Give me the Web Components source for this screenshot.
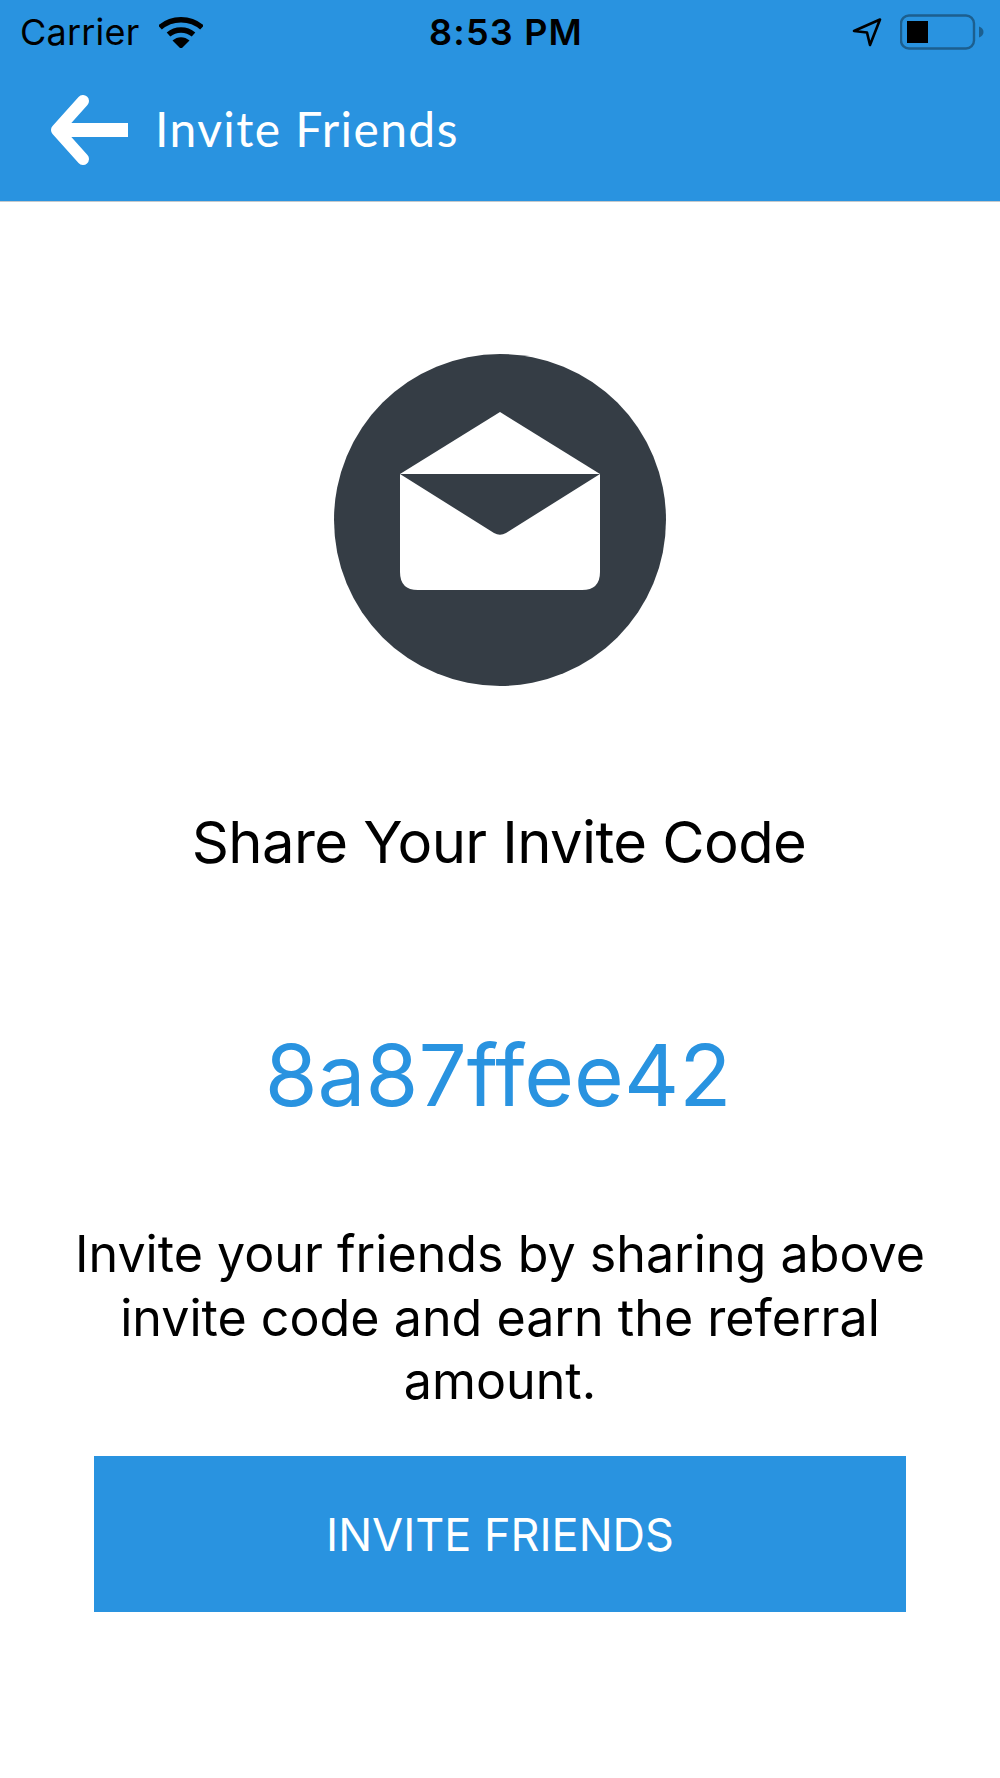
<!DOCTYPE html>
<html>
<head>
<meta charset="utf-8">
<title>Invite Friends</title>
<style>
  html, body { margin: 0; padding: 0; background: #fff; }
</style>
</head>
<body>
<invite-screen>
  <app-header title="Invite Friends"></app-header>
  <mail-badge></mail-badge>
  <invite-text kind="heading">Share Your Invite Code</invite-text>
  <invite-text kind="code">8a87ffee42</invite-text>
  <invite-text kind="body">Invite your friends by sharing above invite code and earn the referral amount.</invite-text>
  <invite-button>INVITE FRIENDS</invite-button>
</invite-screen>

<script>
class InviteScreen extends HTMLElement {
  constructor() {
    super();
    this.shadowDOM = this.attachShadow({mode: "open"});
  }
  connectedCallback() {
    this.shadowDOM.innerHTML = `
    <style>
      :host {
        display: flex;
        flex-direction: column;
        align-items: center;
        width: 100%;
        height: 1778px;
        background: #fff;
        overflow: hidden;
      }
    </style>
    <slot></slot>`;
  }
}

class AppHeader extends HTMLElement {
  constructor() {
    super();
    this.shadowDOM = this.attachShadow({mode: "open"});
  }
  connectedCallback() {
    this.shadowDOM.innerHTML = `
    <style>
      * { box-sizing: border-box; margin: 0; padding: 0; }
      :host {
        display: block;
        width: 100%;
        height: 201px;
        background: #2993e0;
        border-bottom: 1px solid #c4c9cc;
      }
      .status {
        display: grid;
        grid-template-columns: 1fr auto 1fr;
        align-items: center;
        height: 64px;
        color: #000;
        font-family: Inter, "Liberation Sans", sans-serif;
      }
      .left { display: flex; align-items: center; padding-left: 20px; gap: 20px; font-size: 36px; letter-spacing: .2px; }
      .time { padding-left: 12px; font-size: 36px; font-weight: 600; letter-spacing: 1.2px; }
      .right { display: flex; align-items: center; justify-content: flex-end; padding-right: 16px; gap: 18px; }
      .nav {
        display: flex;
        align-items: center;
        height: 136px;
        padding: 0 0 4px 50px;
        gap: 25px;
        color: #fff;
        font: 400 48px Lato, "Open Sans", sans-serif;
        letter-spacing: 1.4px;
      }
      .nav span { margin-bottom: 4px; }
      svg { display: block; }
    </style>
    <div class="status">
      <div class="left">
        <span>Carrier</span>
        <svg width="44" height="32" viewBox="0 0 44 32">
          <path d="M1 10.5C12.5 0 31.5 0 43 10.5" transform="translate(0 1)" fill="none" stroke="#000" stroke-width="5.5"/>
          <path d="M9.5 18.5C16.5 12.5 27.5 12.5 34.5 18.5" fill="none" stroke="#000" stroke-width="5.5"/>
          <path d="M13.5 24.5C18.5 20 25.5 20 30.5 24.5L22 33Z" fill="#000"/>
        </svg>
      </div>
      <div class="time">8:53 PM</div>
      <div class="right">
        <svg width="30" height="30" viewBox="0 0 30 30">
          <path d="M2 14L28 2.5 18 28 15 15.5Z" fill="none" stroke="#000" stroke-width="2.6" stroke-linejoin="round"/>
        </svg>
        <svg width="84" height="36" viewBox="0 0 84 36">
          <rect x="1" y="1.5" width="73" height="33" rx="8" fill="none" stroke="#1c5f8f" stroke-width="2.4"/>
          <rect x="7" y="7" width="21" height="22" fill="#000"/>
          <path d="M79 12.5C82 13.5 83.5 15.5 83.5 18S82 22.500 79 23.500Z" fill="#1c5f8f"/>
        </svg>
      </div>
    </div>
    <div class="nav">
      <svg width="80" height="70" viewBox="0 0 80 70">
        <path d="M78 35H8" fill="none" stroke="#fff" stroke-width="14"/>
        <path d="M33 6 7 35 33 64" fill="none" stroke="#fff" stroke-width="12" stroke-linejoin="round" stroke-linecap="round"/>
      </svg>
      <span>${this.getAttribute("title")}</span>
    </div>`;
  }
}

class MailBadge extends HTMLElement {
  constructor() {
    super();
    this.shadowDOM = this.attachShadow({mode: "open"});
  }
  connectedCallback() {
    this.shadowDOM.innerHTML = `
    <style>
      :host { display: block; width: 332px; height: 332px; margin-top: 152px; }
      svg { display: block; }
    </style>
    <svg width="332" height="332" viewBox="0 0 332 332">
      <circle cx="166" cy="166" r="166" fill="#353d45"/>
      <path d="M66 120 166 58 266 120Z" fill="#fff"/>
      <path d="M66 120 160 179Q166 182.500 172 179L266 120V218Q266 236 248 236H84Q66 236 66 218Z" fill="#fff"/>
    </svg>`;
  }
}

class InviteText extends HTMLElement {
  constructor() {
    super();
    this.shadowDOM = this.attachShadow({mode: "open"});
  }
  connectedCallback() {
    this.shadowDOM.innerHTML = `
    <style>
      :host {
        display: block;
        text-align: center;
        font-family: Inter, "Liberation Sans", sans-serif;
        color: #000;
      }
      :host([kind="heading"]) { margin-top: 122px; padding-right: 2px; font-size: 58px; line-height: 68px; letter-spacing: -.6px; }
      :host([kind="code"]) { margin-top: 147px; padding-right: 4px; font-size: 85.5px; line-height: 104px; color: #2993e0; }
      :host([kind="body"]) { margin-top: 95px; width: 880px; font-size: 50.2px; line-height: 63.500px; }
    </style>
    <slot></slot>`;
  }
}

class InviteButton extends HTMLElement {
  constructor() {
    super();
    this.shadowDOM = this.attachShadow({mode: "open"});
  }
  connectedCallback() {
    this.shadowDOM.innerHTML = `
    <style>
      :host {
        display: flex;
        align-items: center;
        justify-content: center;
        box-sizing: border-box;
        width: 812px;
        height: 156px;
        margin-top: 43px;
        padding-top: 2px;
        background: #2993e0;
        color: #fff;
        font: 400 45px Inter, "Liberation Sans", sans-serif;
      }
    </style>
    <slot></slot>`;
  }
}

customElements.define("invite-screen", InviteScreen);
customElements.define("app-header", AppHeader);
customElements.define("mail-badge", MailBadge);
customElements.define("invite-text", InviteText);
customElements.define("invite-button", InviteButton);
</script>
</body>
</html>
